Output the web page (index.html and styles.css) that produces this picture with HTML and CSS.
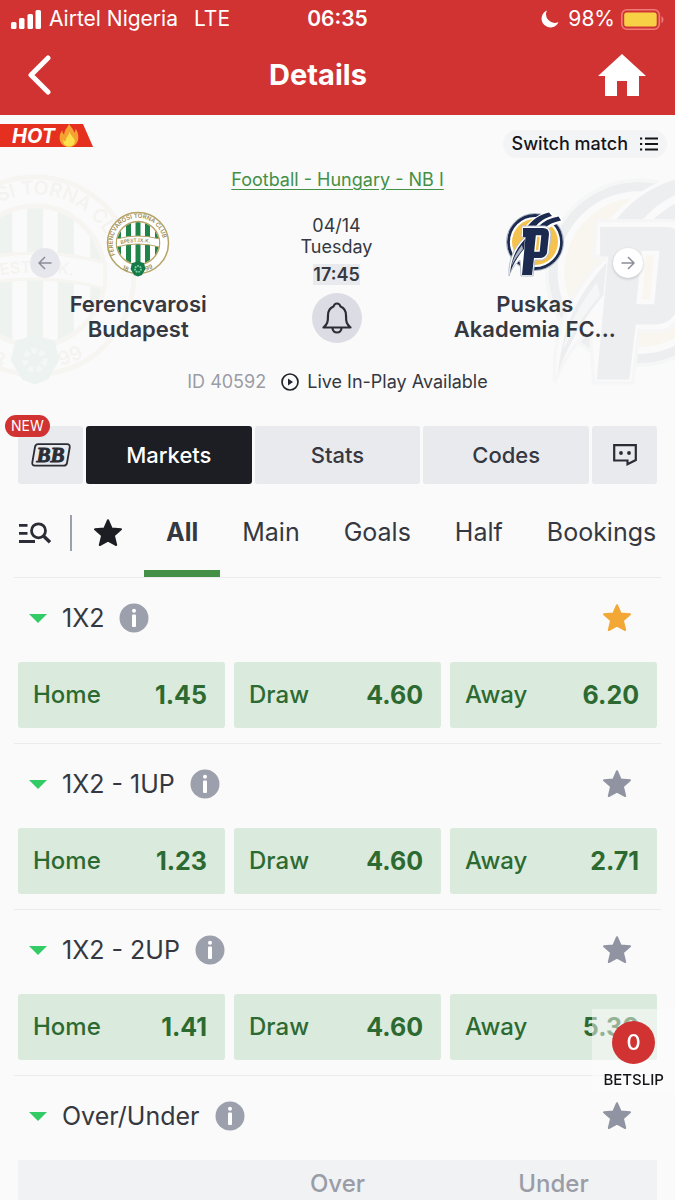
FILE: index.html
```html
<!DOCTYPE html>
<html lang="en">
<head>
<meta charset="utf-8">
<meta name="viewport" content="width=device-width, initial-scale=1">
<title>Details</title>
<link rel="stylesheet" href="styles.css">
</head>
<body>
<svg class="sprite" aria-hidden="true">
  <symbol id="star" viewBox="0 0 30 30"><path d="M15 2.2 18.6 10.400 28 11.300 20.900 17.600 23.200 27 15 22.500 6.800 27 9.100 17.600 2 11.300 11.400 10.400Z" fill="currentColor" stroke="currentColor" stroke-width="2" stroke-linejoin="round"/></symbol>
  <symbol id="caret" viewBox="0 0 18 9"><path d="M0 0H18L9 9Z" fill="currentColor"/></symbol>
  <symbol id="info" viewBox="0 0 30 30"><circle cx="15" cy="15" r="14.5" fill="#9ca0ac"/><circle cx="15" cy="7.7" r="2" fill="#fff"/><rect x="13" y="11.5" width="4" height="12.5" rx="1" fill="#fff"/></symbol>
  <symbol id="crest-home" viewBox="0 0 64 66">
    <circle cx="32" cy="32" r="30.5" fill="#fff" stroke="#b5a468" stroke-width="1.5"/>
    <clipPath id="crest-inner"><circle cx="32" cy="32" r="21"/></clipPath>
    <g clip-path="url(#crest-inner)">
      <rect x="10" y="10" width="44" height="44" fill="#fff"/>
      <path d="M12.500 10V54M22.500 10V54M32 10V54M41.500 10V54M51.500 10V54" stroke="#1f8449" stroke-width="5"/>
    </g>
    <circle cx="32" cy="32" r="21.500" fill="none" stroke="#b5a468" stroke-width="1.500"/>
    <path d="M10.500 28Q32 22 53.500 28V36Q32 30 10.500 36Z" fill="#fff" stroke="#b5a468" stroke-width="1"/>
    <path id="arc-top" d="M9.600 44A25.300 25.300 0 1 1 54.400 44" fill="none"/>
    <path id="arc-mid" d="M14 33.500Q32 28.500 51 33.500" fill="none"/>
    <text class="crest-ring"><textPath href="#arc-top" startOffset="0">FERENCVAROSI TORNA CLUB</textPath></text>
    <text class="crest-band"><textPath href="#arc-mid" startOffset="1">BPEST.IX.K.</textPath></text>
    <text class="crest-year" x="16" y="58" transform="rotate(22 16 58)">18</text>
    <text class="crest-year" x="40" y="60" transform="rotate(-22 40 60)">99</text>
    <path d="M26 52 32 50.500 38 52 39.500 58 36 64 32 65.500 28 64 24.500 58Z" fill="#157a48"/>
    <circle cx="32" cy="58" r="3" fill="none" stroke="#7fd0a8" stroke-width="1.800" stroke-dasharray="1.600 1"/>
  </symbol>
  <symbol id="crest-away" viewBox="0 0 64 66">
    <circle cx="32" cy="31" r="28.500" fill="#fff" stroke="#aab2bf" stroke-width="1"/>
    <circle cx="32" cy="31" r="26.500" fill="none" stroke="#1b2a4e" stroke-width="2.800"/>
    <circle cx="32" cy="31" r="23" fill="#f4c24d"/>
    <path d="M22 16C27 9 36 3 46 0L50 4 58 5 60 11C53 13 48 15 44 19L36 17Z" fill="#fff"/>
    <path d="M24 16C29 9 36 4 46 1.500L49 5C42 7 37 10 32 16ZM35 16C41 10 47 7 55.500 5.500L58 9.500C50 11.500 46 13 42 17Z" fill="#1b2a4e"/>
    <path d="M22 26C11 36 5 49 6 65C9 57 13 52 17 49L18 65H30L32 49H40Q44 47 46 42L48 23Q47 16 42 15H19L18 26Z" fill="#fff" stroke="#b8bfca" stroke-width="1"/>
    <path d="M22 28C13 38 9 46 7 62C11 51 16 44 21 38ZM20 17H40Q46 17 46 23L44 42Q42 47 37 47H31L29 64H19L22.500 26H20Z" fill="#1b2a4e"/>
    <path d="M19 34C13 42 10 48 8.500 55C12 48 16 43 20 38Z" fill="#aeb6c3"/>
    <path d="M33.500 25H37.500L36 40H32Z" fill="#f4c24d" stroke="#fff" stroke-width="1.500"/>
  </symbol>
</svg>

<header class="top">
  <div class="status">
    <div class="status-side">
      <svg class="signal" viewBox="0 0 30 19" aria-hidden="true"><g fill="#fff"><rect x="0" y="12" width="5.500" height="7" rx="1.500"/><rect x="8" y="8" width="5.500" height="11" rx="1.500"/><rect x="16.500" y="4" width="5.500" height="15" rx="1.500"/><rect x="24.500" y="0" width="5.500" height="19" rx="1.500"/></g></svg>
      <span>Airtel Nigeria</span><span class="network">LTE</span>
    </div>
    <time class="clock">06:35</time>
    <div class="status-side status-end">
      <svg class="moon" viewBox="0 0 18 18" aria-hidden="true"><path d="M6 .5A8.800 8.800 0 1 0 17.500 12 8.600 8.600 0 0 1 6 .5Z" fill="#fff"/></svg>
      <span>98%</span>
      <svg class="battery" viewBox="0 0 43 21" aria-hidden="true"><rect x=".8" y=".8" width="37.500" height="19.400" rx="5" fill="none" stroke="#ef7b78" stroke-width="1.600"/><rect x="3.200" y="3.500" width="32.500" height="14" rx="2.500" fill="#f7d046"/><path d="M40.500 7Q42.500 8 42.500 10.500T40.500 14Z" fill="#ef7b78"/></svg>
    </div>
  </div>
  <div class="titlebar">
    <button aria-label="Back"><svg class="back" viewBox="0 0 24 40" aria-hidden="true"><path d="M20 3 3 20 20 37" fill="none" stroke="#fff" stroke-width="5" stroke-linecap="round" stroke-linejoin="round"/></svg></button>
    <h1>Details</h1>
    <button aria-label="Home"><svg class="home" viewBox="0 0 48 42" aria-hidden="true"><path d="M24 0 48 22H41V42H29V27H19V42H7V22H0Z" fill="#fff"/></svg></button>
  </div>
</header>

<main>
  <section class="match">
    <svg class="watermark watermark-home" aria-hidden="true"><use href="#crest-home"/></svg>
    <svg class="watermark watermark-away" aria-hidden="true"><use href="#crest-away"/></svg>
    <div class="match-top">
      <div class="hot"><span>HOT</span>
        <svg class="flame" viewBox="0 0 20 24" aria-hidden="true"><path d="M10 0C12 3 15 6 15.500 9 16.500 8 17 6.500 17 5 19 8 20 11.500 19.700 15 19.200 20.500 15 24 10 24S.6 20.500.2 15C0 11.500 1.200 9 3 6.500 3 8.500 3.500 10 5 11 5.200 6.500 8 4 10 0Z" fill="#f5a233"/><path d="M10.500 8C11 11 14.500 13 16 17 16.500 21 13.500 23.500 10 23.500S3.500 21 4 16.500C5 18 5.500 18 6.500 17.500 7 13.500 10 12 10.500 8Z" fill="#fbe04b"/></svg>
      </div>
      <button class="switch">Switch match
        <svg class="list" viewBox="0 0 18 14" aria-hidden="true"><path d="M5 1.500H18M5 7H18M5 12.500H18" stroke="#15161a" stroke-width="2"/><path d="M0 1.500H2.200M0 7H2.200M0 12.500H2.200" stroke="#15161a" stroke-width="2.200"/></svg>
      </button>
    </div>
    <a class="league" href="#league">Football - Hungary - NB I</a>
    <div class="teams">
      <button class="arrow arrow-prev" aria-label="Previous match"><svg viewBox="0 0 14 14" aria-hidden="true"><path d="M13.500 7H1M7 1 1 7 7 13" fill="none" stroke="#8b8d98" stroke-width="1.500"/></svg></button>
      <div class="team"><svg class="crest" aria-hidden="true"><use href="#crest-home"/></svg><h2>Ferencvarosi Budapest</h2></div>
      <div class="kickoff">
        <span>04/14</span><span>Tuesday</span><time>17:45</time>
        <button class="bell" aria-label="Notify me"><svg viewBox="0 0 30 32" aria-hidden="true"><path d="M15 1.500C12.800 1.500 12 2.800 11.500 4.500 7.500 6 6 9 6 13.500 6 20 5.500 22 1.500 25.500H28.500C24.500 22 24 20 24 13.500 24 9 22.500 6 18.500 4.500 18 2.800 17.200 1.500 15 1.500ZM10.500 26C10.500 32 19.500 32 19.500 26" fill="none" stroke="#2b2d36" stroke-width="2.200" stroke-linejoin="round"/></svg></button>
      </div>
      <div class="team"><svg class="crest" aria-hidden="true"><use href="#crest-away"/></svg><h2>Puskas Akademia FC...</h2></div>
      <button class="arrow arrow-next" aria-label="Next match"><svg viewBox="0 0 14 14" aria-hidden="true"><path d="M.5 7H13M7 1 13 7 7 13" fill="none" stroke="#8b8d98" stroke-width="1.500"/></svg></button>
    </div>
    <p class="meta"><span class="match-id">ID 40592</span>
      <svg class="play" viewBox="0 0 18 18" aria-hidden="true"><circle cx="9" cy="9" r="8" fill="none" stroke="#22242b" stroke-width="1.700"/><path d="M7 5.500 12 9 7 12.500Z" fill="#22242b"/></svg>
      <span>Live In-Play Available</span></p>
  </section>

  <nav class="sections">
    <button class="section-tab" aria-label="Bet builder, new"><span class="new">NEW</span>
      <svg class="bb" viewBox="0 0 40 24" aria-hidden="true"><path d="M7 1.200H36Q39.200 1.200 38.700 4.500L36 20Q35.500 22.600 32.500 22.600H4Q.8 22.600 1.300 19.500L4 4Q4.500 1.200 7 1.200Z" fill="none" stroke="#2b2d36" stroke-width="1.800"/><text class="bb-text" x="5.500" y="18.500">BB</text></svg>
    </button>
    <button class="section-tab section-active">Markets</button>
    <button class="section-tab">Stats</button>
    <button class="section-tab">Codes</button>
    <button class="section-tab" aria-label="Chat"><svg class="chat" viewBox="0 0 24 22" aria-hidden="true"><path d="M1.200 1.200H22.800V16L14.500 20.200V16.500H1.200Z" fill="none" stroke="#2b2d36" stroke-width="2.200"/><circle cx="8" cy="9" r="1.900" fill="#2b2d36"/><circle cx="16" cy="9" r="1.900" fill="#2b2d36"/></svg></button>
  </nav>

  <nav class="filters">
    <button class="filter-icon" aria-label="Search markets"><svg class="find" viewBox="0 0 33 22" aria-hidden="true"><path d="M0 3.300H8.500M0 11.300H8.500M0 19.500H16" stroke="#2b2d36" stroke-width="2.800"/><circle cx="19.500" cy="8.800" r="7" fill="none" stroke="#2b2d36" stroke-width="2.800"/><path d="M24.500 14 31 20.300" stroke="#2b2d36" stroke-width="3.400"/></svg></button>
    <button class="filter-icon filter-fav" aria-label="Favourites"><svg class="fav" aria-hidden="true"><use href="#star"/></svg></button>
    <button class="filter filter-active">All</button>
    <button class="filter">Main</button>
    <button class="filter">Goals</button>
    <button class="filter">Half</button>
    <button class="filter">Bookings</button>
  </nav>

  <section class="market">
    <header class="market-head"><svg class="caret" aria-hidden="true"><use href="#caret"/></svg><h3>1X2</h3><svg class="info" aria-hidden="true"><use href="#info"/></svg><button class="star star-on" aria-label="Favourite 1X2"><svg aria-hidden="true"><use href="#star"/></svg></button></header>
    <div class="odds">
      <button class="odd"><span>Home</span><b>1.45</b></button>
      <button class="odd"><span>Draw</span><b>4.60</b></button>
      <button class="odd"><span>Away</span><b>6.20</b></button>
    </div>
  </section>
  <section class="market">
    <header class="market-head"><svg class="caret" aria-hidden="true"><use href="#caret"/></svg><h3>1X2 - 1UP</h3><svg class="info" aria-hidden="true"><use href="#info"/></svg><button class="star" aria-label="Favourite 1X2 - 1UP"><svg aria-hidden="true"><use href="#star"/></svg></button></header>
    <div class="odds">
      <button class="odd"><span>Home</span><b>1.23</b></button>
      <button class="odd"><span>Draw</span><b>4.60</b></button>
      <button class="odd"><span>Away</span><b>2.71</b></button>
    </div>
  </section>
  <section class="market">
    <header class="market-head"><svg class="caret" aria-hidden="true"><use href="#caret"/></svg><h3>1X2 - 2UP</h3><svg class="info" aria-hidden="true"><use href="#info"/></svg><button class="star" aria-label="Favourite 1X2 - 2UP"><svg aria-hidden="true"><use href="#star"/></svg></button></header>
    <div class="odds">
      <button class="odd"><span>Home</span><b>1.41</b></button>
      <button class="odd"><span>Draw</span><b>4.60</b></button>
      <button class="odd"><span>Away</span><b>5.30</b></button>
    </div>
  </section>
  <section class="market market-last">
    <header class="market-head"><svg class="caret" aria-hidden="true"><use href="#caret"/></svg><h3>Over/Under</h3><svg class="info" aria-hidden="true"><use href="#info"/></svg><button class="star" aria-label="Favourite Over/Under"><svg aria-hidden="true"><use href="#star"/></svg></button></header>
    <table class="lines"><thead><tr><td></td><th scope="col">Over</th><th scope="col">Under</th></tr></thead></table>
  </section>
</main>

<button class="betslip"><span class="betslip-count">0</span><span>BETSLIP</span></button>
</body>
</html>
```
FILE: styles.css
```css
* { box-sizing: border-box; }
body {
  margin: 0;
  background: #fafafa;
  color: #353840;
  font-family: Inter, "Liberation Sans", sans-serif;
}
button {
  margin: 0;
  padding: 0;
  border: 0;
  background: none;
  color: inherit;
  font: inherit;
}
svg { display: block; flex: none; }
h1, h2, h3, p { margin: 0; }
.sprite { position: absolute; width: 0; height: 0; }

.top { background: #d13332; color: #fff; }
.status {
  display: grid;
  grid-template-columns: 1fr auto 1fr;
  align-items: center;
  padding: 6px 11px 5px;
  font-size: 21px;
  line-height: 26px;
}
.status-side { display: flex; align-items: center; gap: 8px; }
.status-end { justify-content: flex-end; gap: 6px; }
.network { margin-left: 8px; }
.clock { font-weight: 600; }
.signal { width: 30px; height: 19px; }
.moon { width: 18px; height: 18px; margin-right: 3px; }
.battery { width: 43px; height: 21px; }
.titlebar {
  display: flex;
  align-items: center;
  padding: 17px 29px 19px 28px;
}
.titlebar h1 {
  flex: 1;
  padding-right: 14px;
  font-size: 29px;
  line-height: 34px;
  font-weight: 700;
  text-align: center;
}
.back { width: 24px; height: 40px; }
.home { width: 48px; height: 42px; }

.match {
  position: relative;
  overflow: hidden;
  display: flex;
  flex-direction: column;
  align-items: center;
  padding: 9px 0 10px;
}
.match > * { position: relative; }
.match > .watermark {
  position: absolute;
  top: 57px;
  width: 208px;
  height: 214px;
  opacity: 0.05;
}
.match > .watermark-home { left: -69px; }
.match > .watermark-away { right: -68px; }
.match-top {
  align-self: stretch;
  display: flex;
  justify-content: space-between;
  align-items: flex-start;
  padding-right: 8px;
}
.hot {
  display: flex;
  align-items: center;
  gap: 4px;
  padding: 0 14px 0 12px;
  height: 23px;
  background: #e5301f;
  clip-path: polygon(0 0, 83px 0, 100% 100%, 0 100%);
  color: #fff;
  font-size: 20px;
  font-style: italic;
  font-weight: 700;
}
.flame { width: 20px; height: 23px; }
.switch {
  display: flex;
  align-items: center;
  gap: 12px;
  margin-top: 6px;
  padding: 2px 9px;
  border-radius: 14px;
  background: #f3f4f6;
  color: #15161a;
  font-size: 18px;
  line-height: 24px;
  font-weight: 500;
}
.list { width: 18px; height: 14px; }
.league {
  margin-top: 11px;
  color: #449046;
  font-size: 18px;
  line-height: 22px;
  text-underline-offset: 3px;
}
.teams {
  align-self: stretch;
  display: grid;
  grid-template-columns: 30px minmax(0, 1fr) 240px minmax(0, 1fr) 30px;
  align-items: start;
  padding: 0 32px 0 30px;
  margin-top: 20px;
}
.team { display: flex; flex-direction: column; align-items: center; gap: 15px; }
.team h2 {
  width: 170px;
  font-size: 22px;
  line-height: 25px;
  font-weight: 600;
  text-align: center;
}
.crest { width: 64px; height: 66px; }
.arrow {
  display: grid;
  place-items: center;
  height: 30px;
  margin-top: 37px;
  border-radius: 50%;
}
.arrow svg { width: 14px; height: 14px; }
.arrow-prev { background: #e6e7ed; }
.arrow-next { background: #fff; box-shadow: 0 1px 3px rgba(0, 0, 0, 0.2); }
.kickoff {
  display: flex;
  flex-direction: column;
  align-items: center;
  padding-top: 4px;
  font-size: 18px;
  line-height: 21px;
}
.kickoff time { margin: 7px 0 8px; background: #e9eaee; font-weight: 600; }
.bell {
  display: grid;
  place-items: center;
  width: 50px;
  height: 50px;
  border-radius: 50%;
  background: #dcdce4;
}
.bell svg { width: 30px; height: 32px; }
.meta {
  display: flex;
  align-items: center;
  margin-top: 28px;
  font-size: 18px;
  line-height: 22px;
}
.match-id { margin-right: 15px; color: #9a9ca6; }
.play { width: 18px; height: 18px; margin-right: 8px; }

.sections {
  display: grid;
  grid-template-columns: 65px 1fr 1fr 1fr 65px;
  gap: 3px;
  padding: 23px 18px 0;
}
.section-tab {
  position: relative;
  display: grid;
  place-items: center;
  min-height: 58px;
  border-radius: 3px;
  background: #e9eaed;
  font-size: 22px;
  line-height: 26px;
  font-weight: 500;
}
.section-active { background: #1c1e23; color: #fff; }
.new {
  position: absolute;
  left: -13px;
  top: -11px;
  padding: 0 6px;
  border-radius: 11px;
  background: #d13332;
  color: #fff;
  font-size: 14px;
  line-height: 22px;
  font-weight: 400;
}
.bb { width: 40px; height: 24px; }
.bb-text {
  fill: #2b2d36;
  stroke: #2b2d36;
  stroke-width: 1;
  font: italic 700 21px "Liberation Serif", serif;
}
.chat { width: 24px; height: 22px; }

.filters {
  display: flex;
  margin: 5px 14px 0;
  border-bottom: 1px solid #ececef;
}
.filter-icon {
  display: flex;
  align-items: center;
  padding: 0 18px 0 5px;
  height: 88px;
  flex: none;
}
.find { width: 33px; height: 22px; }
.filter-fav { padding: 0 21px 0 0; }
.filter-fav::before {
  content: "";
  width: 2px;
  height: 36px;
  margin-right: 21px;
  background: #9ca0ac;
}
.fav { width: 30px; height: 30px; color: #1c1e23; }
.filter {
  flex: none;
  padding: 5px 22px 0;
  border-bottom: 7px solid transparent;
  font-size: 25px;
  line-height: 30px;
  font-weight: 400;
}
.filter-active { border-color: #449046; font-weight: 700; }

.market {
  margin: 0 14px;
  padding: 0 4px 15px;
  border-bottom: 1px solid #ececef;
}
.market-last { padding-bottom: 0; border: 0; }
.market-head {
  display: flex;
  align-items: center;
  padding: 25px 25px 29px 11px;
}
.market-head h3 {
  margin: 0 15px;
  font-size: 25px;
  line-height: 30px;
  font-weight: 400;
}
.caret { width: 18px; height: 9px; color: #32cb66; }
.info { width: 30px; height: 30px; }
.star { margin-left: auto; color: #9094a2; }
.star svg { width: 30px; height: 30px; }
.star-on { color: #f3a735; }
.odds { display: grid; grid-template-columns: repeat(3, 1fr); gap: 9px; }
.odd {
  display: flex;
  align-items: center;
  justify-content: space-between;
  padding: 18px 18px 18px 15px;
  border-radius: 3px;
  background: #daeadc;
  color: #2d6a31;
  font-size: 24px;
  line-height: 30px;
  font-weight: 500;
}
.odd b { font-size: 25px; font-weight: 700; }
.lines { display: block; background: #f1f2f4; }
.lines thead { display: block; }
.lines tr {
  display: grid;
  grid-template-columns: repeat(3, 1fr);
  gap: 9px;
  padding: 10px 0 2px;
}
.lines th, .lines td {
  padding: 0;
  color: #9a9ca6;
  font-size: 24px;
  line-height: 28px;
  font-weight: 500;
  text-align: center;
}

.betslip {
  position: fixed;
  right: 0;
  bottom: 106px;
  display: flex;
  flex-direction: column;
  align-items: center;
  gap: 6px;
  padding: 12px 11px 4px;
  background: rgba(252, 252, 252, 0.5);
  color: #15161a;
  font-size: 15px;
  line-height: 20px;
  font-weight: 500;
}
.betslip-count {
  width: 43px;
  height: 43px;
  border-radius: 50%;
  background: #d13332;
  color: #fff;
  font-size: 22px;
  line-height: 43px;
}
.crest-ring, .crest-band, .crest-year {
  fill: #9c8c54;
  font-family: Inter, "Liberation Sans", sans-serif;
  font-weight: 600;
}
.crest-ring { font-size: 6px; }
.crest-band { font-size: 5px; }
.crest-year { font-size: 6px; }
```
